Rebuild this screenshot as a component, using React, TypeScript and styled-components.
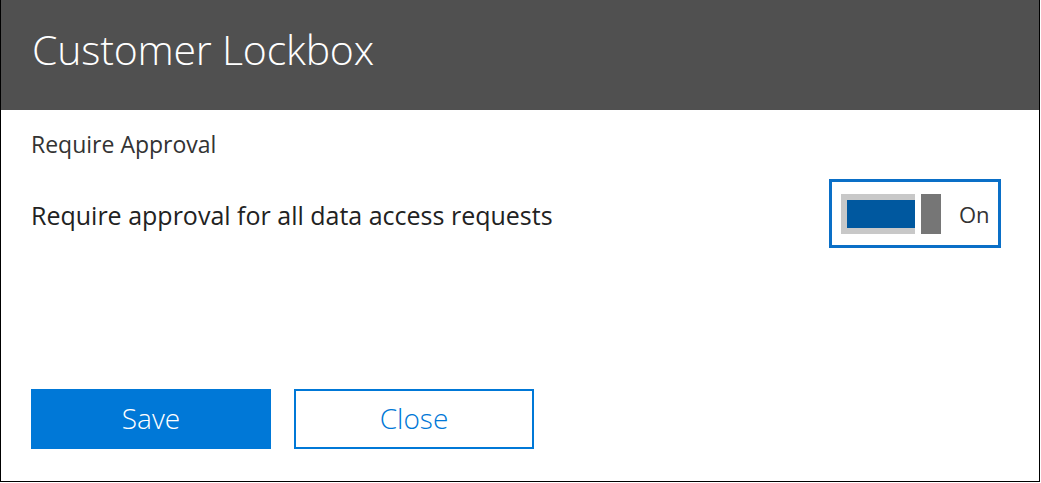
import React from "react";
import styled, { createGlobalStyle } from "styled-components";

const Global = createGlobalStyle`
  html, body { margin: 0; padding: 0; background: #ffffff; }
  body { font-family: "Open Sans", "Noto Sans", sans-serif; }
`;

const Frame = styled.div`
  box-sizing: border-box;
  width: 1040px;
  height: 482px;
  border-left: 1px solid #000;
  border-right: 1px solid #000;
  border-bottom: 1px solid #000;
  display: flex;
  flex-direction: column;
  background: #fff;
`;

const Header = styled.header`
  height: 110px;
  background: #505050;
  display: flex;
  align-items: center;
  padding-left: 31px;
  flex-shrink: 0;
`;

const Title = styled.h1`
  margin: 0;
  font-family: "Open Sans", sans-serif;
  font-weight: 300;
  font-size: 41px;
  color: #ffffff;
  letter-spacing: -0.2px;
  padding-bottom: 12px;
`;

const Body = styled.main`
  flex: 1;
  display: flex;
  flex-direction: column;
  padding: 18px 38px 0 30px;
`;

const Section = styled.div`
  font-size: 23px;
  color: #333;
  line-height: 32px;
`;

const Row = styled.div`
  display: flex;
  align-items: center;
  justify-content: space-between;
  margin-top: 19px;
`;

const Label = styled.div`
  font-size: 25px;
  color: #222;
  padding-top: 2px;
`;

const Toggle = styled.div`
  box-sizing: border-box;
  width: 172px;
  height: 69px;
  border: 3px solid #0a6fc7;
  display: flex;
  align-items: center;
  padding-left: 9px;
`;

const Track = styled.div`
  box-sizing: border-box;
  width: 74px;
  height: 40px;
  background: #c8c8c8;
  padding: 6px 0 6px 6px;
  display: flex;
`;

const Fill = styled.div`
  flex: 1;
  background: #00589f;
`;

const Thumb = styled.div`
  width: 20px;
  height: 40px;
  background: #767676;
  margin-left: 6px;
`;

const ToggleText = styled.span`
  margin-left: 18px;
  font-size: 22px;
  color: #333;
`;

const Actions = styled.div`
  margin-top: auto;
  margin-bottom: 32px;
  display: flex;
  gap: 23px;
`;

const Button = styled.button<{ $primary?: boolean }>`
  box-sizing: border-box;
  width: 240px;
  height: 60px;
  font-family: "Open Sans", sans-serif;
  font-weight: 300;
  font-size: 28px;
  cursor: pointer;
  background: ${(p) => (p.$primary ? "#0078d7" : "#ffffff")};
  color: ${(p) => (p.$primary ? "#ffffff" : "#0078d7")};
  border: 2px solid #0078d7;
  padding: 0 0 2px;
`;

export default function App() {
  return (
    <>
      <Global />
      <Frame>
        <Header>
          <Title>Customer Lockbox</Title>
        </Header>
        <Body>
          <Section>Require Approval</Section>
          <Row>
            <Label>Require approval for all data access requests</Label>
            <Toggle role="switch" aria-checked="true">
              <Track>
                <Fill />
              </Track>
              <Thumb />
              <ToggleText>On</ToggleText>
            </Toggle>
          </Row>
          <Actions>
            <Button $primary>Save</Button>
            <Button>Close</Button>
          </Actions>
        </Body>
      </Frame>
    </>
  );
}
